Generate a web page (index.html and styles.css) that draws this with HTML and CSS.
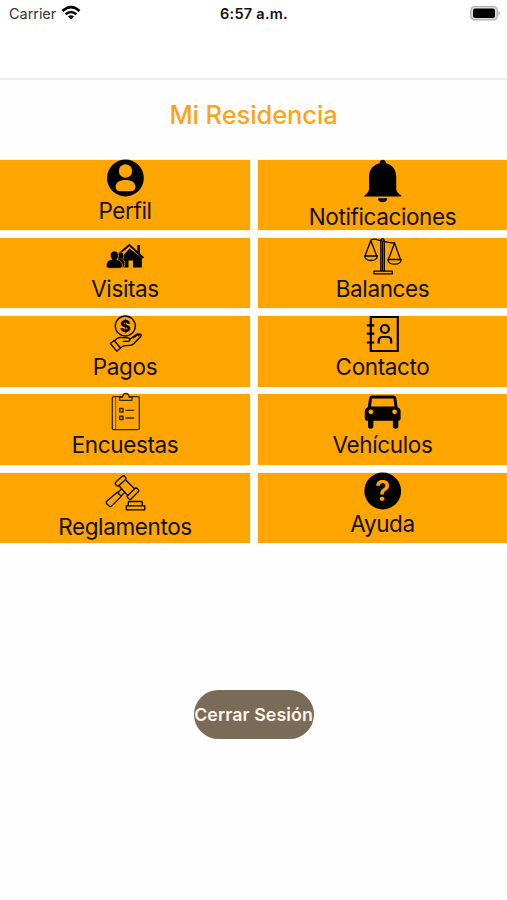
FILE: index.html
```html
<!DOCTYPE html>
<html lang="es">
<head>
<meta charset="utf-8">
<title>Mi Residencia</title>
<link rel="stylesheet" href="styles.css">
</head>
<body>
<header class="header">
  <div class="status">
    <div class="carrier"><span>Carrier</span>
      <svg width="20" height="16" viewBox="0 0 20 16" fill="none" stroke="#000" stroke-width="2.6"><path d="M1.5 6Q10-1.8 18.5 6M4.6 9.4Q10 4.6 15.4 9.4"/><path d="M7 11.5Q10 9 13 11.5L10 14.6Z" fill="#000" stroke="none"/></svg>
    </div>
    <time class="time">6:57 a.m.</time>
    <svg class="battery" width="32" height="16" viewBox="0 0 32 16"><rect x="1.8" y="1.500" width="26.500" height="13.400" rx="4" fill="#ddd" stroke="#aaa" stroke-width="1.2"/><rect x="4" y="3.500" width="22" height="9.400" rx="2" fill="#000"/><path d="M29.500 6q3 2.200 0 4.400z" fill="#aaa"/></svg>
  </div>
</header>
<main class="main">
  <h1 class="title">Mi Residencia</h1>
  <nav class="grid">
    <a class="tile"><svg class="icon" viewBox="0 0 40 37"><circle cx="20.4" cy="18" r="18.4"/><g fill="#ffa500"><circle cx="20.5" cy="11" r="6.7"/><path d="M10.6 27c0-4.5 3.8-7 9.9-7s9.9 2.5 9.9 7c0 2.8-2 4.3-4.5 4.3H15.1c-2.5 0-4.5-1.5-4.5-4.3z"/></g></svg><span class="label">Perfil</span></a>
    <a class="tile"><svg class="icon tall" viewBox="0 0 40 43"><path d="M16.600 3.300C16.600-1.300 23-1.300 23 3.300c7 1.700 10.200 7 10.200 13.700V29q0 3 5.300 6.800v.7H1.300v-.7Q6 32 6 29V17C6 10.300 9.500 5 16.600 3.300zM15 38.300h9.300q-.5 4-4.700 4t-4.600-4z"/></svg><span class="label">Notificaciones</span></a>
    <a class="tile"><svg class="icon" viewBox="0 0 40 37"><path d="M18.500 17L24.600 10.500 36.800 20v9.500H28v-7h-4.500v7h-6.300z"/><path d="M14.300 15.500L24.400 7 38.300 20" fill="none" stroke="#000" stroke-width="2"/><path d="M32.300 7H35v9l-2.700-2.500z"/><g stroke="#ffa500" stroke-width=".7"><path d="M12.700 17.500c0-5 6-4.500 6.200 0 0 2-1 3-1 4 2 1 2.500 3.500 1 8h-6z"/><path d="M7 21.500C3.500 17 6 13 9.300 13s6 4 2.700 8.500c4 1 5.400 4 5.400 6.500 0 2-2 2.300-4 2.300H5.500c-3 0-4.300-.8-4.200-2.800C1.400 24.500 3 22 7 21.500z"/></g></svg><span class="label">Visitas</span></a>
    <a class="tile"><svg class="icon line" viewBox="0 0 40 37"><path d="M17.800 33V2q1.800-2.500 3.500 0v31M10.800 33.200h18.500v2.600H10.800zM19.500 4v29M7.800 2q4-2 7.500.2l9 2q3.500 1 7.200.5M7.800 2.500L2 18M7.800 2.500L13.700 18M1.500 18h13c-.8 6-12 6-13 0zM31.500 5l-6 16.500M31.500 5l6 16.500M24.800 21.500h13.400c-.8 6.300-12.500 6.300-13.400 0z"/></svg><span class="label">Balances</span></a>
    <a class="tile"><svg class="icon line" viewBox="0 0 40 37"><circle cx="20.300" cy="10" r="10"/><text class="dollar" x="20.300" y="16">$</text><path d="M5.300 27.500L9.200 24.500 15.500 32 11.800 35.200zM9.500 25q3-4 7.200-3.500l6.200.3c3 .3 2.600 3.400 0 3.500h-4.500M24.500 23.500l6.800-5c2-1.300 3.500.2 2.500 1.300M28.500 21.800l5-3.500c2-1 3.600.3 2.200 2.200l-7 7.300q-1.500 1.300-4 1.500l-6 .5-3.500 2.200"/></svg><span class="label">Pagos</span></a>
    <a class="tile"><svg class="icon contact" viewBox="0 0 40 37"><path d="M7.800 1h27v34h-27zM3.800 9.300h7.500M3.800 17.700h7.500M3.800 26.500h7.500M15.700 27.500V25q0-4 4-4h4.500q4 0 4 4v2.500"/><circle cx="21.900" cy="13" r="4"/></svg><span class="label">Contacto</span></a>
    <a class="tile"><svg class="icon line survey" viewBox="0 0 40 37"><rect x="7.300" y="2.700" width="27" height="33" rx="1.500"/><path d="M14.700 6.300V3.500l3-.5q.3-3.500 3.200-3.500T24 3l3 .5v2.800z" fill="#ffa500"/><path d="M10.700 4v31" stroke-width=".8" stroke-dasharray="1 1"/><path d="M14.700 14.600h3.300V18h-3.300zM14.700 22.300h3.300v3.300h-3.300z" stroke-width="1.500"/><path d="M21 16.300h7.700M21 24h7.700"/></svg><span class="label">Encuestas</span></a>
    <a class="tile"><svg class="icon" viewBox="0 0 40 37"><path fill-rule="evenodd" d="M9 1.400h21.500q2.500 0 2.800 2.500l1.300 9.300q3 1 3 4.300v7.200q0 2-2 2h-.3v5.300q0 2.700-2.700 2.700t-2.700-2.700v-5.300H10.400V32q0 2.700-2.700 2.700T5 32v-5.300H3.800q-2 0-2-2v-7.200q0-3.300 3-4.300l1.300-9.300q.4-2.500 2.900-2.500zM9 4.400L8 12.600h23.500L30.400 4.400z"/><g fill="#ffa500"><circle cx="7.900" cy="17.800" r="2.400"/><circle cx="31.600" cy="17.800" r="2.400"/></g></svg><span class="label">Vehículos</span></a>
    <a class="tile"><svg class="icon law line" viewBox="0 0 40 40"><path d="M10.500 11.300q-.7-1.200.3-2.200l6.700-6q1.200-.8 2.200.3l1 1.300q.6 1-.3 2l-6.800 6q-1.100.8-2-.2zM22.600 22.700l7.200-7.200q1.200-1 2.300 0l1.300 1.400q.8 1-.2 2L26 26q-1.200.9-2.100-.1l-1.300-1.400q-.7-.9 0-1.800zM14 12.800l8.800 9.800M20.700 7l8.800 8.700M16.500 16l-3.800 3.800 3.300 3.300 3.800-3.800M12.200 19.300l-10.500 9q-1 1.300 0 2.400l2.800 2.600q1.200.9 2.400-.4l9.300-9.500M21.300 32.800h18.500v4H21.300zM23.300 32.800v-3.500q0-.8.800-.8h12.400q.8 0 .8.800v3.500"/></svg><span class="label">Reglamentos</span></a>
    <a class="tile"><svg class="icon" viewBox="0 0 40 37"><circle cx="19.700" cy="18" r="18.400"/><text class="question" x="19.700" y="28">?</text></svg><span class="label">Ayuda</span></a>
  </nav>
  <button class="logout"><span>Cerrar Sesión</span></button>
</main>
</body>
</html>
```
FILE: styles.css
```css
* { box-sizing: border-box; }
body { margin: 0; height: 900px; background: #fefefe; font-family: Inter, "Liberation Sans", sans-serif; color: #111; overflow: hidden; }
.header { height: 80px; background: #fff; border-bottom: 2px solid #ededed; }
.status { height: 28px; padding: 0 6px 0 9px; display: grid; grid-template-columns: 1fr auto 1fr; align-items: center; }
.carrier { display: flex; align-items: center; gap: 5px; font-size: 14.500px; letter-spacing: -.05px; margin-top: -1px; color: #333; }
.carrier svg { margin-top: -1px; }
.time { margin: -2px 2px 0 0; font-size: 14.500px; font-weight: 600; letter-spacing: .25px; }
.battery { justify-self: end; margin-top: -2px; }
.main { display: flex; flex-direction: column; align-items: center; }
.title { margin: 19px 0 28.600px; height: 32px; line-height: 32px; font-size: 25.500px; font-weight: 500; letter-spacing: -.1px; color: #faa41a; white-space: nowrap; }
.grid { width: 100%; display: grid; grid-template-columns: 250px 249px; gap: 7.750px 8px; grid-auto-rows: 70.500px; }
.tile { display: flex; flex-direction: column; align-items: center; background: #ffa500; box-shadow: 0 0 1px #ffca68; }
.icon { width: 40px; height: 37px; flex: none; overflow: visible; }
.tall { height: 43px; }
.law { height: 40px; }
.line { fill: none; stroke: #000; stroke-width: 1.300; stroke-linejoin: round; stroke-linecap: round; }
.survey { stroke: #3a2800; }
.contact { fill: none; stroke: #000; stroke-width: 2.200; }
.dollar { font-size: 16px; font-weight: 800; text-anchor: middle; fill: #000; stroke: none; }
.question { font-size: 28px; font-weight: 600; text-anchor: middle; fill: #ffa500; }
.label { height: 27px; line-height: 27px; font-size: 22.500px; letter-spacing: -.38px; white-space: nowrap; }
.logout { width: 120px; height: 49px; margin: 146.600px 0 0; padding: 0; border: 0; border-radius: 25px; background: #7a6a58; color: #fff5e8; font-family: inherit; font-size: 17.800px; font-weight: 600; letter-spacing: .08px; white-space: nowrap; display: flex; align-items: center; justify-content: center; }
```
